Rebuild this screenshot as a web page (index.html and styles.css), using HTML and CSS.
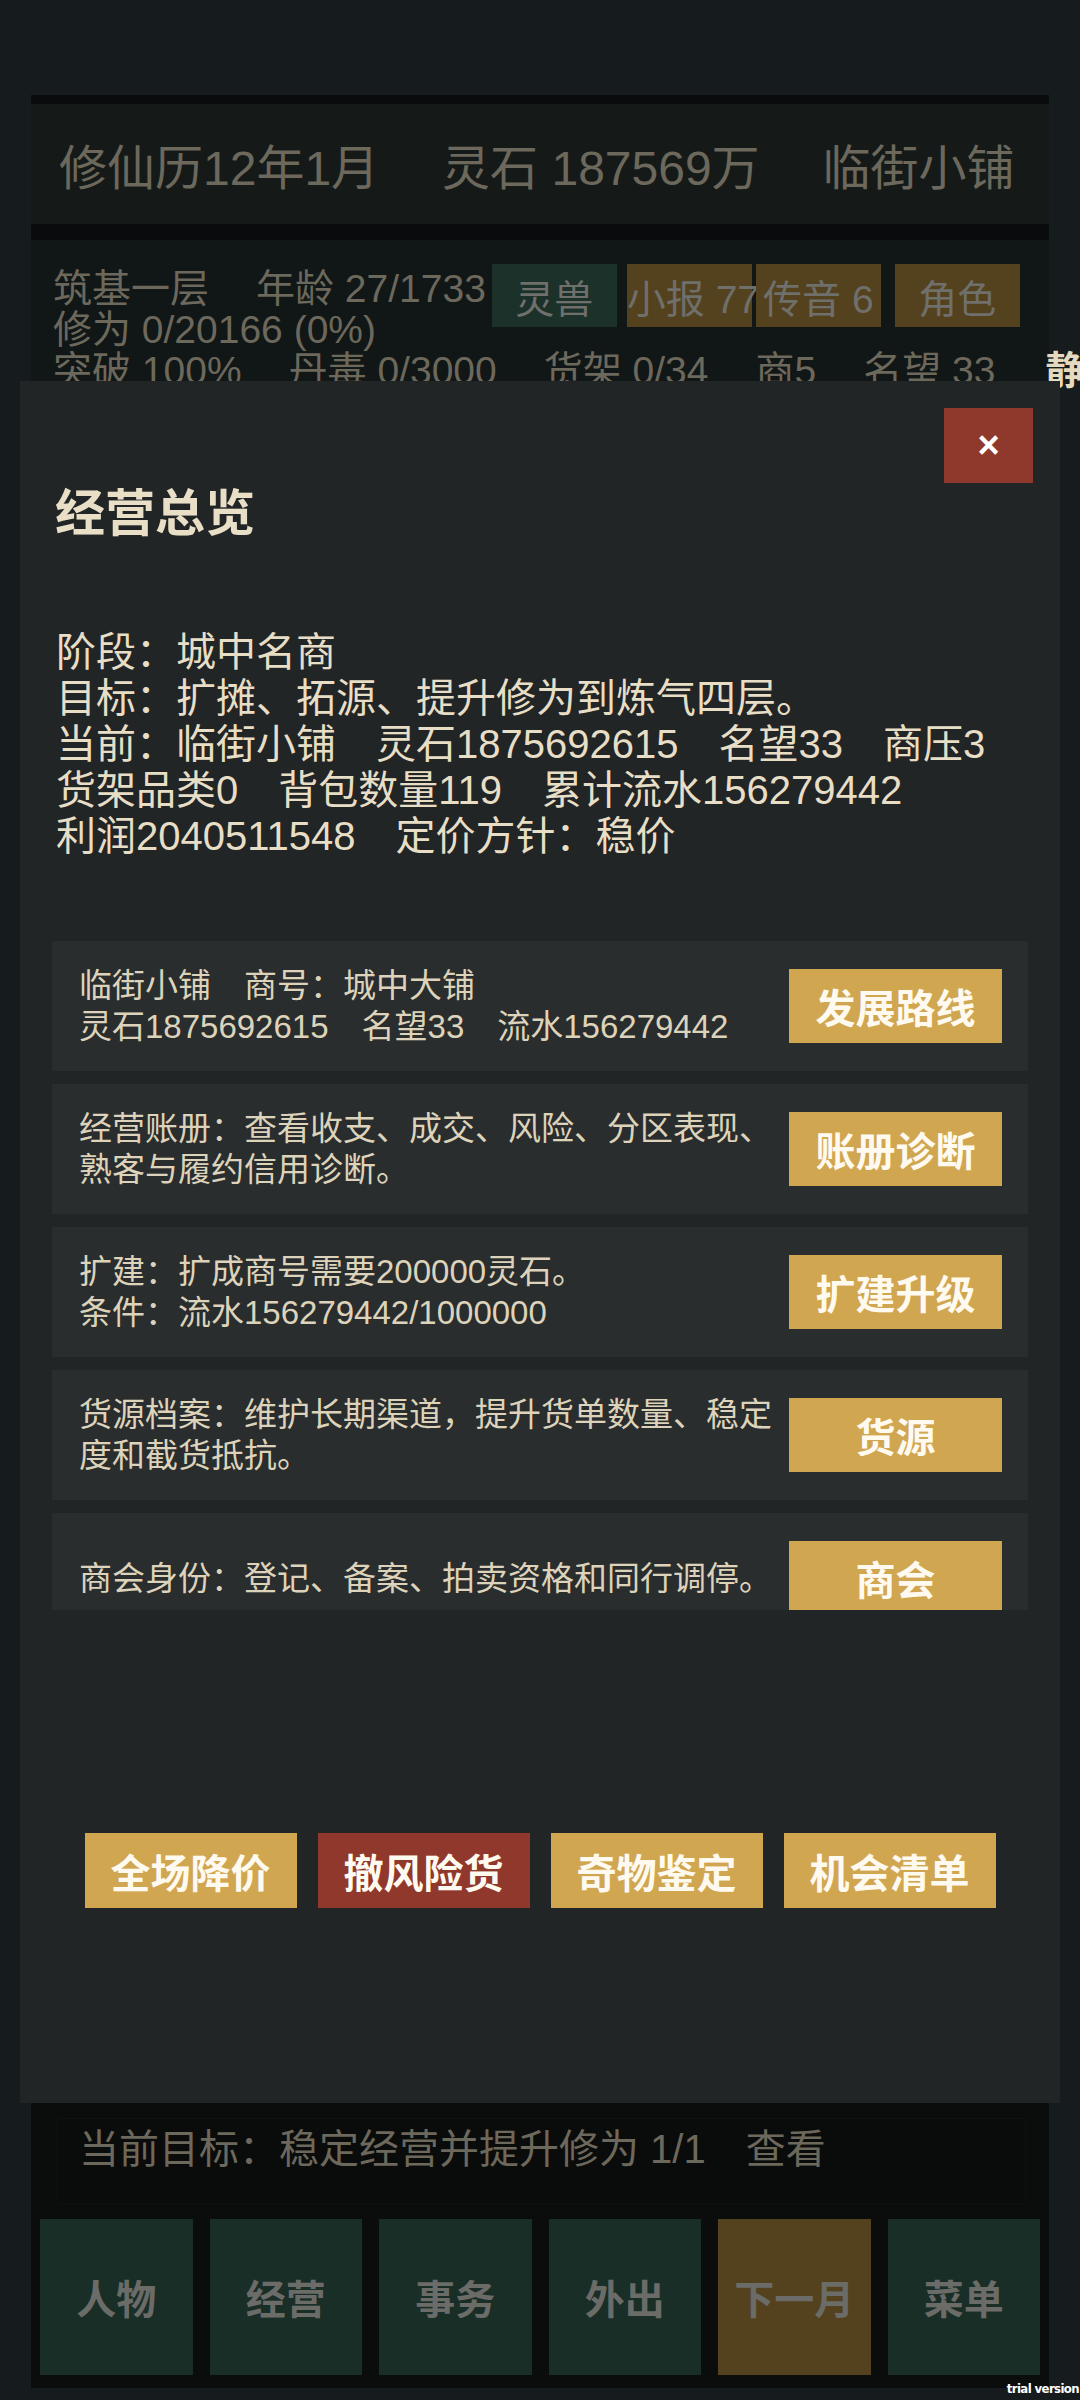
FILE: index.html
```html
<!DOCTYPE html>
<html lang="zh-CN">
<head>
<meta charset="UTF-8" />
<meta name="viewport" content="width=device-width, initial-scale=1" />
<title>修仙商铺 - 经营总览</title>
<link rel="stylesheet" href="styles.css">
</head>
<body>

<div id="app">
  <div class="topbar">
    <span>修仙历12年1月</span>
    <span>灵石 187569万</span>
    <span>临街小铺</span>
  </div>

  <div class="status">
    <div class="row">
      <span>筑基一层</span>
      <span>年龄 27/1733</span>
      <div class="quick">
        <button class="chip green">灵兽</button>
        <button class="chip brown chip-news">小报 77</button>
        <button class="chip brown chip-msg">传音 6</button>
        <button class="chip brown chip-role">角色</button>
      </div>
    </div>
    <div class="row"><span>修为 0/20166 (0%)</span></div>
    <div class="row">
      <span>突破 100%</span>
      <span>丹毒 0/3000</span>
      <span>货架 0/34</span>
      <span>商5</span>
      <span>名望 33</span>
      <span class="bright">静</span>
    </div>
  </div>

  <div class="bottom">
    <div class="goal">当前目标：稳定经营并提升修为 1/1<span class="goal-link">查看</span></div>
    <div class="nav">
      <button class="nav-btn">人物</button>
      <button class="nav-btn">经营</button>
      <button class="nav-btn">事务</button>
      <button class="nav-btn">外出</button>
      <button class="nav-btn next">下一月</button>
      <button class="nav-btn">菜单</button>
    </div>
  </div>
</div>

<div class="modal">
  <button class="close-btn">×</button>
  <h2 class="modal-title">经营总览</h2>
  <div class="modal-info">
    <div>阶段：城中名商</div>
    <div>目标：扩摊、拓源、提升修为到炼气四层。</div>
    <div>当前：临街小铺　灵石1875692615　名望33　商压3</div>
    <div>货架品类0　背包数量119　累计流水156279442</div>
    <div>利润2040511548　定价方针：稳价</div>
  </div>

  <div class="list">
    <div class="card">
      <div class="card-text">临街小铺　商号：城中大铺<br>灵石1875692615　名望33　流水156279442</div>
      <button class="card-btn">发展路线</button>
    </div>
    <div class="card">
      <div class="card-text">经营账册：查看收支、成交、风险、分区表现、熟客与履约信用诊断。</div>
      <button class="card-btn">账册诊断</button>
    </div>
    <div class="card">
      <div class="card-text">扩建：扩成商号需要200000灵石。<br>条件：流水156279442/1000000</div>
      <button class="card-btn">扩建升级</button>
    </div>
    <div class="card">
      <div class="card-text">货源档案：维护长期渠道，提升货单数量、稳定度和截货抵抗。</div>
      <button class="card-btn">货源</button>
    </div>
    <div class="card">
      <div class="card-text">商会身份：登记、备案、拍卖资格和同行调停。</div>
      <button class="card-btn">商会</button>
    </div>
  </div>

  <div class="actions">
    <button class="act">全场降价</button>
    <button class="act danger">撤风险货</button>
    <button class="act">奇物鉴定</button>
    <button class="act">机会清单</button>
  </div>
</div>

<div class="watermark">trial version</div>

</body>
</html>
```

FILE: styles.css
```css
body {
  margin: 0;
  padding: 0;
  background: #161b1e;
  font-family: "Liberation Sans", "Noto Sans CJK SC", sans-serif;
  overflow: hidden;
}
button {
  font-family: inherit;
  border: none;
  padding: 0;
  cursor: pointer;
}
#app {
  width: 1018px;
  height: 2388px;
  margin: 0 auto;
  padding-top: 95px;
  box-sizing: border-box;
  display: flex;
  flex-direction: column;
}
.topbar {
  height: 120px;
  border-top: 9px solid #0a0b0c;
  background: #151a19;
  display: flex;
  align-items: center;
  gap: 63px;
  padding-left: 28px;
  font-size: 48px;
  color: #6c685c;
  white-space: nowrap;
}
.status {
  flex: 1;
  border-top: 16px solid #0a0b0c;
  background: #111616;
  padding: 28px 22px 0;
  font-size: 39px;
  line-height: 41px;
  color: #6c685c;
}
.row {
  display: flex;
  height: 41px;
  white-space: nowrap;
}
.row span + span {
  margin-left: 47px;
}
.row .bright {
  margin-left: 50px;
  color: #e4dac0;
  font-weight: bold;
}
.quick {
  display: flex;
  align-items: flex-start;
  margin-left: 6px;
  margin-top: -4px;
}
.chip {
  width: 125px;
  height: 63px;
  font-size: 39px;
  color: #6f6f6b;
}
.chip.green { background: #1c3129; }
.chip.brown { background: #54421f; }
.chip-news { margin-left: 10px; }
.chip-msg { margin-left: 4px; }
.chip-role { margin-left: 14px; }

.bottom {
  height: 298px;
  box-sizing: border-box;
  background: #0b0d0d;
  padding: 28px 9px 13px;
}
.goal {
  height: 86px;
  box-sizing: border-box;
  margin: 0 14px 0 17px;
  padding: 5px 0 0 21px;
  border: 1px solid #0f1111;
  background: #0a0b0b;
  font-size: 40px;
  line-height: 50px;
  color: #6c685b;
}
.goal-link {
  margin-left: 40px;
}
.nav {
  margin-top: 15px;
  height: 156px;
  display: grid;
  grid-template-columns: repeat(6, 1fr);
  gap: 17px;
}
.nav-btn {
  background: #1a2e28;
  color: #6b6b68;
  font-size: 40px;
  font-weight: bold;
}
.nav-btn.next {
  background: #54421f;
}

.modal {
  position: absolute;
  top: 381px;
  left: 20px;
  width: 1040px;
  height: 1722px;
  box-sizing: border-box;
  padding: 0 32px;
  background: #212526;
}
.close-btn {
  position: absolute;
  top: 27px;
  right: 27px;
  width: 89px;
  height: 75px;
  background: #8f392c;
  color: #fff;
  font-size: 38px;
  font-weight: bold;
}
.modal-title {
  margin: 0;
  padding: 103px 0 0 3px;
  font-size: 50px;
  line-height: 60px;
  font-weight: bold;
  color: #e9dfc7;
}
.modal-info {
  margin-top: 85px;
  padding-left: 4px;
  font-size: 40px;
  line-height: 46px;
  color: #e8dec6;
}
.list {
  margin-top: 82px;
  height: 669px;
  overflow: hidden;
  display: flex;
  flex-direction: column;
  gap: 13px;
}
.card {
  flex-shrink: 0;
  display: flex;
  align-items: center;
  gap: 12px;
  min-height: 82px;
  padding: 24px 26px 24px 27px;
  background: #2a2d2e;
}
.card-text {
  flex: 1;
  font-size: 33px;
  line-height: 41px;
  color: #ddd3bb;
}
.card-btn {
  flex: none;
  width: 213px;
  height: 74px;
  background: #d1a650;
  color: #fffaf0;
  font-size: 40px;
  font-weight: bold;
}
.actions {
  margin-top: 223px;
  display: flex;
  justify-content: center;
  gap: 21px;
}
.act {
  width: 212px;
  height: 75px;
  background: #d1a650;
  color: #fffaf0;
  font-size: 40px;
  font-weight: bold;
}
.act.danger {
  background: #8f382b;
}
.watermark {
  position: absolute;
  right: 1px;
  bottom: 4px;
  font-family: "DejaVu Sans Condensed", "DejaVu Sans", sans-serif;
  font-size: 13px;
  font-weight: bold;
  letter-spacing: -0.6px;
  color: #fff;
}
```
